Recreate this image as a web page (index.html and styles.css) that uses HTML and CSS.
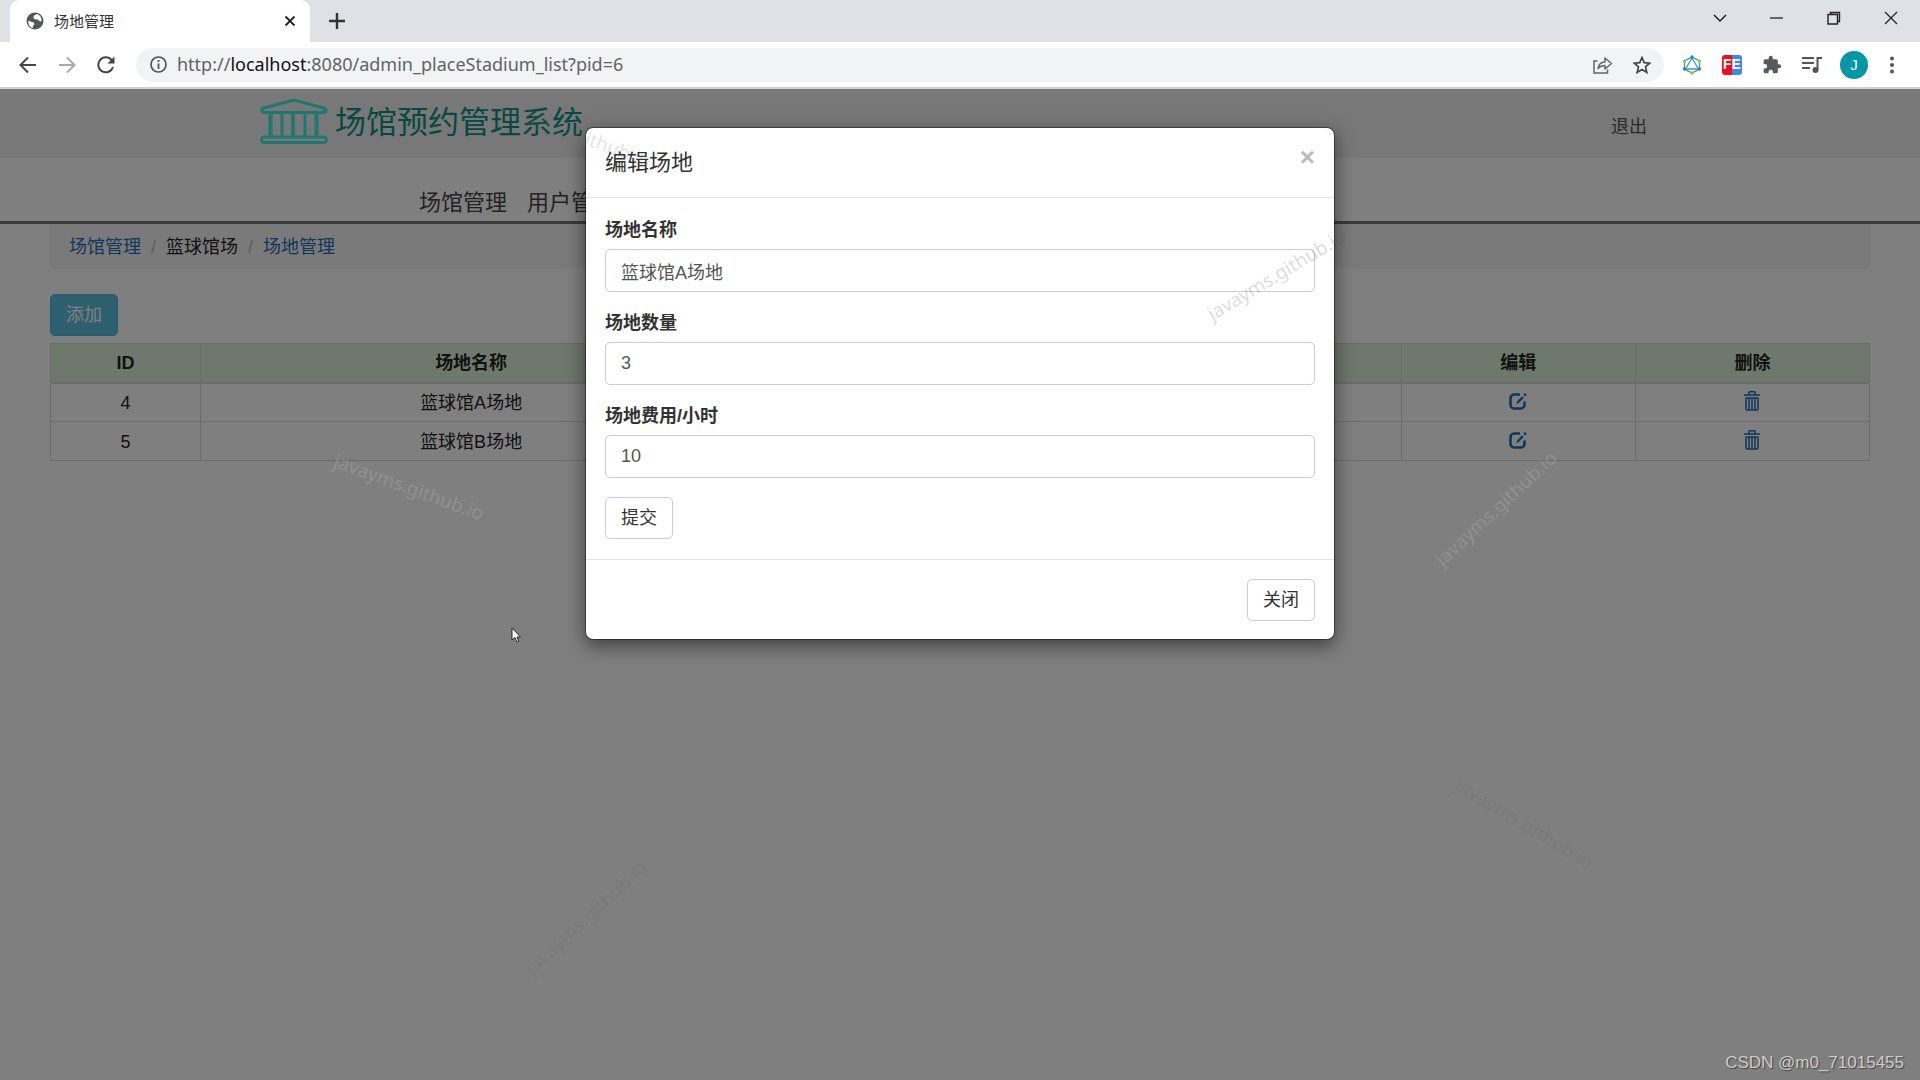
FILE: index.html
```html
<!DOCTYPE html>
<html lang="zh-CN">
<head>
<meta charset="utf-8">
<title>场地管理</title>
<link rel="stylesheet" href="styles.css">
</head>
<body>
<svg class="defs" aria-hidden="true">
  <symbol id="edit" viewBox="0 0 18 17"><path d="M11 1.500H5A3.600 3.600 0 0 0 1.500 5v7A3.600 3.600 0 0 0 5 15.500h7a3.600 3.600 0 0 0 3.500-3.500V8.500" fill="none" stroke="currentColor" stroke-width="2.600"/><path d="M7.300 11.200l1-3 4.700-5 1.700 1.700-4.900 5.200zM14.300 1.800L16 0l1.800 1.700L16 3.500z" fill="currentColor"/></symbol>
  <symbol id="trash" viewBox="0 0 16 20"><path d="M0 4h16M5 4V1.500Q5 .8 5.700 .8h4.600q.7 0 .7.700V4M2 7h12M2 6.500V18q0 1 1 1h10q1 0 1-1V6.500M5 7v12M8 7v12M11 7v12" fill="none" stroke="currentColor" stroke-width="1.500"/></symbol>
</svg>
<div class="browser">
  <div class="tabstrip">
    <div class="tab">
      <svg class="favicon" viewBox="0 0 18 18"><circle cx="9" cy="9" r="8.500" fill="#53575c"/><path d="M2.500 8.500l3 1.500 2 .3 1 2-1.500 1.500-.3 2.200C3.500 15 1.800 12 2.500 8.500zM8 3.500l3-1.500c2.500.8 4.500 3 4.700 6.500-.7 1.500-2 1.300-2.500.3L11.500 7.500 9 7.200 7.300 5.800z" fill="#fff"/></svg>
      <span class="tab-title">场地管理</span>
      <button class="icon-btn tab-close" aria-label="关闭标签页"><svg width="12" height="12" viewBox="0 0 12 12"><path d="M1.500 1.500l9 9M10.500 1.500l-9 9" stroke="#222" stroke-width="1.800"/></svg></button>
    </div>
    <button class="icon-btn new-tab" aria-label="新标签页"><svg width="16" height="16" viewBox="0 0 16 16"><path d="M8 0v16M0 8h16" stroke="#333" stroke-width="2.400"/></svg></button>
    <div class="window-controls">
      <button class="icon-btn" aria-label="搜索标签页"><svg width="14" height="14" viewBox="0 0 14 14"><path d="M1 4l6 6 6-6" fill="none" stroke="#222" stroke-width="1.500"/></svg></button>
      <button class="icon-btn" aria-label="最小化"><svg width="14" height="14" viewBox="0 0 14 14"><path d="M0 7h13" stroke="#222" stroke-width="1.300"/></svg></button>
      <button class="icon-btn" aria-label="还原"><svg width="14" height="14" viewBox="0 0 14 14"><path d="M3.500 3V1.500h9v9H10.500M1 3.500h9.500V13H1z" fill="none" stroke="#222" stroke-width="1.400"/></svg></button>
      <button class="icon-btn" aria-label="关闭"><svg width="14" height="14" viewBox="0 0 14 14"><path d="M1 1l12 12M13 1L1 13" stroke="#222" stroke-width="1.300"/></svg></button>
    </div>
  </div>
  <div class="toolbar">
    <button class="icon-btn nav-btn" aria-label="后退"><svg width="18" height="18" viewBox="0 0 18 18"><path d="M17 9H2M9 1.500L1.500 9 9 16.500" fill="none" stroke="#444" stroke-width="2"/></svg></button>
    <button class="icon-btn nav-btn" aria-label="前进"><svg width="18" height="18" viewBox="0 0 18 18"><path d="M1 9h15M9 1.500L16.500 9 9 16.500" fill="none" stroke="#aaa" stroke-width="2"/></svg></button>
    <button class="icon-btn nav-btn" aria-label="重新加载"><svg width="18" height="18" viewBox="0 0 18 18"><path d="M14.600 4A7.500 7.500 0 1 0 16 11" fill="none" stroke="#444" stroke-width="2"/><path d="M17.500 0.500v7h-7z" fill="#444"/></svg></button>
    <div class="omnibox">
      <svg width="17" height="17" viewBox="0 0 17 17"><circle cx="8.500" cy="8.500" r="7.500" fill="none" stroke="#555" stroke-width="1.700"/><path d="M8.500 7.500V13M8.500 4v2" stroke="#555" stroke-width="1.800"/></svg>
      <span class="url">http://<b>localhost</b>:8080/admin_placeStadium_list?pid=6</span>
      <button class="icon-btn" aria-label="分享"><svg width="20" height="18" viewBox="0 0 20 18"><path d="M4.500 5H1v12h13.500v-3.500" fill="none" stroke="#666" stroke-width="1.500"/><path d="M5 12.500c.5-4 3-6.300 7-6.500V2l6.500 5.500L12 13V9.500c-3 0-5 .8-7 3z" fill="none" stroke="#666" stroke-width="1.500" stroke-linejoin="round"/></svg></button>
      <button class="icon-btn" aria-label="收藏"><svg width="18" height="18" viewBox="0 0 18 18"><path d="M9 1.500l2.200 5.200 5.600.5-4.300 3.700 1.300 5.500L9 13.500l-4.800 2.900 1.300-5.500L1.200 7.200l5.600-.5z" fill="none" stroke="#444" stroke-width="1.700"/></svg></button>
    </div>
    <div class="extensions">
      <button class="icon-btn" aria-label="GraphQL"><svg width="20" height="20" viewBox="0 0 20 20"><path d="M10 2l7.500 4v8L10 18l-7.500-4V6z" fill="none" stroke="#678b75" stroke-width="1.300"/><path d="M10 3l6.500 11h-13z" fill="none" stroke="#299be5" stroke-width="1.300"/><circle cx="10" cy="2" r="1.700" fill="#2586d3"/><circle cx="2.500" cy="14" r="1.700" fill="#2586d3"/><circle cx="17.500" cy="14" r="1.700" fill="#2586d3"/><circle cx="2.500" cy="6" r="1.500" fill="#70d72c"/><circle cx="17.500" cy="6" r="1.500" fill="#70d72c"/><circle cx="10" cy="18" r="1.700" fill="#70d72c"/></svg></button>
      <button class="icon-btn fe" aria-label="FeHelper">FE</button>
      <button class="icon-btn" aria-label="扩展程序"><svg width="20" height="20" viewBox="0 0 24 24"><path d="M20.500 11H19V7a2 2 0 0 0-2-2h-4V3.500a2.500 2.500 0 0 0-5 0V5H4a2 2 0 0 0-2 2v3.800h1.500a2.700 2.700 0 0 1 0 5.400H2V20a2 2 0 0 0 2 2h3.800v-1.500a2.700 2.700 0 0 1 5.400 0V22H17a2 2 0 0 0 2-2v-4h1.500a2.500 2.500 0 0 0 0-5z" fill="#555a60"/></svg></button>
      <button class="icon-btn" aria-label="媒体控制"><svg width="20" height="18" viewBox="0 0 20 18"><path d="M0 2h12M0 7h12M0 12h8" stroke="#555" stroke-width="2"/><path d="M15.500 14V2H20" fill="none" stroke="#555" stroke-width="2"/><circle cx="13.500" cy="14" r="3" fill="#555"/></svg></button>
      <button class="icon-btn avatar" aria-label="个人资料">J</button>
      <button class="icon-btn" aria-label="菜单"><svg width="4" height="18" viewBox="0 0 4 18"><circle cx="2" cy="2.500" r="2" fill="#555"/><circle cx="2" cy="9" r="2" fill="#555"/><circle cx="2" cy="15.500" r="2" fill="#555"/></svg></button>
    </div>
  </div>
</div>

<div class="viewport">
  <div class="page">
    <header class="site-header">
      <div class="brand">
        <svg class="logo" viewBox="0 0 68 46"><g fill="none" stroke="#38f0e4" stroke-width="3"><path d="M34 2L4 10q-3 1-2 3 .5 1.500 3 1.500h58q3 0 3-1.500 0-2-2.500-3z"/><rect x="1.500" y="39" width="65" height="5.500" rx="2.700"/><path d="M10 15v24M22 15v24M33 15v24M45 15v24M57 15v24"/></g><path d="M11 15v24M33 15v24M56 15v24" stroke="#38f0e4" stroke-width="4" opacity=".6"/></svg>
        <h1>场馆预约管理系统</h1>
      </div>
      <a class="logout" href="#">退出</a>
    </header>
    <nav class="main-nav"><a href="#">场馆管理</a><a href="#">用户管理</a></nav>
    <main>
      <ol class="breadcrumb">
        <li><a href="#">场馆管理</a></li><li>篮球馆场</li><li><a href="#">场地管理</a></li>
      </ol>
      <button class="btn btn-info">添加</button>
      <table>
        <colgroup><col class="c-id"><col class="c-name"><col class="c-num"><col class="c-fee"><col class="c-act"><col class="c-act"></colgroup>
        <thead><tr><th>ID</th><th>场地名称</th><th>场地数量</th><th>场地费用/小时</th><th>编辑</th><th>删除</th></tr></thead>
        <tbody>
          <tr><td>4</td><td>篮球馆A场地</td><td>3</td><td>10</td><td><a href="#" aria-label="编辑"><svg class="i-edit"><use href="#edit"/></svg></a></td><td><a href="#" aria-label="删除"><svg class="i-trash"><use href="#trash"/></svg></a></td></tr>
          <tr><td>5</td><td>篮球馆B场地</td><td>3</td><td>10</td><td><a href="#" aria-label="编辑"><svg class="i-edit"><use href="#edit"/></svg></a></td><td><a href="#" aria-label="删除"><svg class="i-trash"><use href="#trash"/></svg></a></td></tr>
        </tbody>
      </table>
    </main>
  </div>

  <div class="backdrop">
    <form class="modal" role="dialog" aria-labelledby="modal-title">
      <div class="modal-header">
        <h2 id="modal-title">编辑场地</h2>
        <button type="button" class="close" aria-label="关闭">×</button>
      </div>
      <div class="modal-body">
        <div class="field"><label for="name">场地名称</label><input id="name" type="text" value="篮球馆A场地"></div>
        <div class="field"><label for="num">场地数量</label><input id="num" type="text" value="3"></div>
        <div class="field"><label for="fee">场地费用/小时</label><input id="fee" type="text" value="10"></div>
        <button type="submit" class="btn btn-default">提交</button>
      </div>
      <div class="modal-footer"><button type="button" class="btn btn-default">关闭</button></div>
    </form>
  </div>

  <span class="mark m1">javayms.github.io</span>
  <span class="mark m2">javayms.github.io</span>
  <span class="mark m3">javayms.github.io</span>
  <span class="mark m4">javayms.github.io</span>
  <span class="mark m5">javayms.github.io</span>
  <span class="mark m6">javayms.github.io</span>
  <svg class="cursor" viewBox="0 0 10 16"><path d="M1 1v12l3-2.500L5.800 15l2-.8L6 10h3.500z" fill="#fff" stroke="#222" stroke-width="1"/></svg>
  <span class="credit">CSDN @m0_71015455</span>
</div>
</body>
</html>
```
FILE: styles.css
```css
* { box-sizing: border-box; }
body {
  margin: 0;
  min-height: 100vh;
  display: flex;
  flex-direction: column;
  overflow: hidden;
  font: 18px/25px "Liberation Sans", "Noto Sans CJK SC", sans-serif;
  color: #333;
}
button, input { font: inherit; color: inherit; }
a { color: #1b6db5; text-decoration: none; }
h1, h2 { margin: 0; font-weight: 400; }
.defs { position: absolute; width: 0; height: 0; }

/* browser window */
.icon-btn {
  display: flex;
  align-items: center;
  justify-content: center;
  padding: 0;
  border: 0;
  background: none;
}
.tabstrip { display: flex; height: 42px; background: #dee1e6; }
.tab {
  display: flex;
  align-items: center;
  gap: 10px;
  width: 300px;
  margin-left: 10px;
  padding: 0 14px 0 16px;
  border-radius: 9px 9px 0 0;
  background: #fff;
}
.favicon { width: 18px; height: 18px; }
.tab-title { flex: 1; font-size: 15px; }
.new-tab { margin-left: 19px; }
.window-controls { display: flex; gap: 43px; margin: 0 22px 6px auto; }
.toolbar {
  display: flex;
  align-items: center;
  height: 47px;
  padding: 0 26px 0 19px;
  border-bottom: 2px solid #d0d0d0;
  background: #fff;
}
.nav-btn { margin-right: 21px; }
.omnibox {
  flex: 1;
  display: flex;
  align-items: center;
  gap: 20px;
  height: 34px;
  padding: 0 13px 0 14px;
  border-radius: 17px;
  background: #f1f3f4;
}
.url { flex: 1; margin-left: -10px; font: 18px/25px "Noto Sans", sans-serif; color: #606468; }
.url b { font-weight: 400; color: #111; }
.extensions { display: flex; align-items: center; gap: 20px; margin-left: 18px; }
.fe {
  width: 20px;
  height: 20px;
  border-radius: 3px;
  background: linear-gradient(90deg, #f20d18 50%, #3b86f0 50%);
  color: #fff;
  font-size: 14px;
  font-weight: 700;
}
.avatar {
  width: 28px;
  height: 28px;
  margin: 0 2px 0 -2px;
  border-radius: 50%;
  background: #0097a7;
  color: #fff;
  font-size: 15px;
}

/* page */
.viewport { position: relative; flex: 1; overflow: hidden; }
.site-header {
  display: flex;
  align-items: center;
  justify-content: space-between;
  height: 69px;
  padding: 0 273px 0 260px;
  background: #f0f0f0;
}
.brand { display: flex; align-items: center; gap: 7px; padding-bottom: 6px; }
.logo { width: 68px; height: 46px; }
.brand h1 { padding-top: 4px; font-size: 31px; line-height: 46px; color: #0a9088; }
.logout { padding-top: 8px; color: #555; }
.main-nav {
  display: flex;
  align-items: flex-end;
  gap: 20px;
  height: 66px;
  padding: 0 419px 2px;
  border-bottom: 3px solid #777;
  font-size: 22px;
  line-height: 32px;
}
.main-nav a { color: #444; }
main { padding: 0 50px; }
.breadcrumb {
  display: flex;
  margin: 0 0 25px;
  padding: 11px 19px 9px;
  border-radius: 0 0 5px 5px;
  background: #f5f5f5;
  list-style: none;
  color: #222;
}
.breadcrumb li + li::before { content: "/"; padding: 0 10px; color: #bbb; }
.btn {
  height: 42px;
  padding: 1px 15px 0;
  border: 1px solid #ccc;
  border-radius: 5px;
  background: #fff;
}
.btn-info { border-color: #46b8da; background: #5bc0de; color: #fff; }
table {
  width: 100%;
  margin-top: 7px;
  border-collapse: collapse;
  table-layout: fixed;
  text-align: center;
  color: #222;
}
.c-id { width: 8.250%; }
.c-name { width: 29.750%; }
.c-num { width: 17%; }
.c-fee { width: 19.250%; }
th, td { height: 39px; padding: 2px 0 0; border: 1px solid #d8d8d8; }
th { border-bottom-width: 2px; background: #dff0d8; }
td a { display: flex; justify-content: center; padding-bottom: 4px; }
.i-edit { width: 18px; height: 17px; }
.i-trash { width: 16px; height: 20px; }

/* dialog */
.backdrop {
  position: absolute;
  inset: 0;
  padding-top: 38px;
  background: rgba(0, 0, 0, .5);
}
.modal {
  width: 750px;
  margin: 0 auto;
  border: 1px solid rgba(0, 0, 0, .4);
  border-radius: 8px;
  background: #fff;
  background-clip: padding-box;
  box-shadow: 0 6px 19px rgba(0, 0, 0, .5);
}
.modal-header {
  display: flex;
  justify-content: space-between;
  padding: 19px 19px 18px;
  border-bottom: 1px solid #e5e5e5;
}
.modal-header h2 { font-size: 22px; line-height: 32px; }
.close {
  height: 20px;
  padding: 0;
  border: 0;
  background: none;
  color: #bbb;
  font-size: 26px;
  line-height: 20px;
  font-weight: 700;
}
.modal-body { padding: 20px 19px; }
.field { margin-bottom: 19px; }
.field label { display: block; margin-bottom: 6px; font-weight: 700; }
.field input {
  display: block;
  width: 100%;
  height: 43px;
  padding: 0 15px;
  border: 1px solid #ccc;
  border-radius: 5px;
  color: #555;
}
.modal-footer {
  display: flex;
  justify-content: flex-end;
  padding: 19px 19px 18px;
  border-top: 1px solid #e5e5e5;
}

/* overlays */
.mark {
  position: absolute;
  font: 19px/24px "Noto Sans", sans-serif;
  color: rgba(255, 255, 255, .14);
  transform-origin: 0 50%;
  pointer-events: none;
}
.m1 { left: 335px; top: 359px; transform: rotate(20deg); }
.m2 { left: 1209px; top: 214px; color: rgba(70, 70, 70, .2); transform: rotate(-31deg); }
.m3 { left: 1438px; top: 461px; transform: rotate(-43deg); }
.m4 { left: 1457px; top: 682px; color: rgba(0, 0, 0, .06); transform: rotate(31deg); }
.m5 { left: 528px; top: 870px; color: rgba(0, 0, 0, .06); transform: rotate(-43deg); }
.m6 { left: 502px; top: 6px; color: rgba(120, 120, 120, .2); transform: rotate(20deg); }
.cursor { position: absolute; left: 511px; top: 538px; width: 10px; height: 16px; }
.credit {
  position: absolute;
  right: 16px;
  bottom: 5px;
  font-size: 17px;
  color: #ccc;
  text-shadow: 1px 1px 1px #444;
}
```
